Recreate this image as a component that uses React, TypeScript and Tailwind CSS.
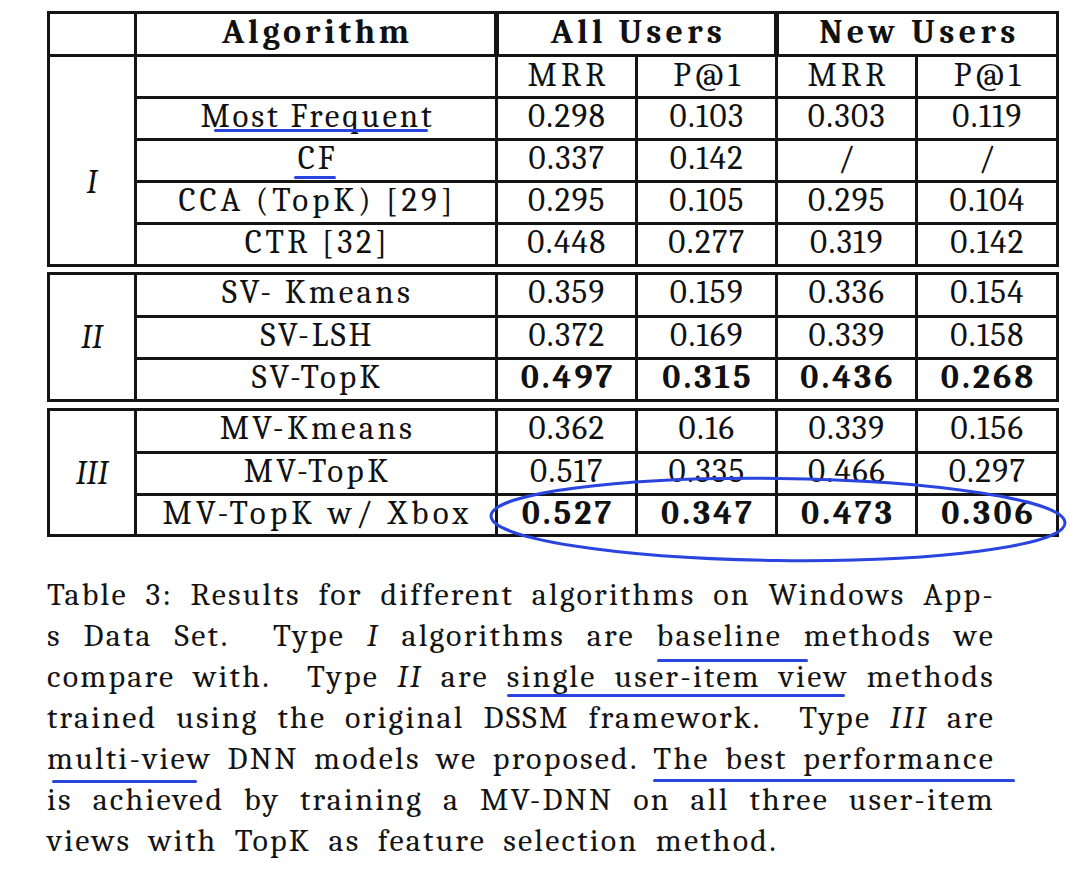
import React from "react";

const B = "border-[#141414]";

type RowData = {
  name: React.ReactNode;
  vals: string[];
  bold?: boolean;
  h: string;
  last?: boolean;
  track?: string;
};

function NumCell({ v, bold, idx }: { v: string; bold?: boolean; idx: number }) {
  return (
    <div
      className={`flex justify-center ${idx < 3 ? `border-r-[3px] ${B}` : ""} ${
        bold ? "text-[34px] font-bold tracking-[3px] pl-[3px]" : "text-[33px] tracking-[1.4px] pl-[1px]"
      }`}
    >
      {v}
    </div>
  );
}

function DataRow({ name, vals, bold, h, last, track }: RowData) {
  return (
    <div
      className={`grid grid-cols-[361px_140px_140px_140px_138px] ${h} ${last ? "" : `border-b-[3px] ${B}`}`}
    >
      <div className={`flex justify-center border-r-[3px] ${B} ${track ?? "tracking-[2.8px]"} pl-[3px]`}>{name}</div>
      {vals.map((v, i) => (
        <NumCell key={i} v={v} bold={bold} idx={i} />
      ))}
    </div>
  );
}

function TypeCell({ label, extra }: { label: string; extra?: string }) {
  return (
    <div
      className={`w-[87px] shrink-0 flex items-center justify-center border-r-[3px] ${B} italic ${extra ?? ""}`}
    >
      {label}
    </div>
  );
}

function Blue({ className }: { className: string }) {
  return <span className={`absolute h-[3px] bg-[#2a44df] rounded-full ${className}`} />;
}

export default function App() {
  const sectionI: RowData[] = [
    {
      name: (
        <span className="relative">
          Most Frequent
          <Blue className="left-[13px] right-[6px] top-[30px]" />
        </span>
      ),
      vals: ["0.298", "0.103", "0.303", "0.119"],
      h: "h-[42px]",
    },
    {
      name: (
        <span className="relative">
          CF
          <Blue className="left-[-4px] right-[1px] top-[35px]" />
        </span>
      ),
      vals: ["0.337", "0.142", "/", "/"],
      h: "h-[42px]",
    },
    { name: "CCA (TopK) [29]", vals: ["0.295", "0.105", "0.295", "0.104"], h: "h-[42px]", track: "tracking-[4px]" },
    { name: "CTR [32]", vals: ["0.448", "0.277", "0.319", "0.142"], h: "h-[39px]", last: true, track: "tracking-[3.6px]" },
  ];
  const sectionII: RowData[] = [
    { name: "SV- Kmeans", vals: ["0.359", "0.159", "0.336", "0.154"], h: "h-[43px]", track: "tracking-[3.2px]" },
    { name: "SV-LSH", vals: ["0.372", "0.169", "0.339", "0.158"], h: "h-[42px]" },
    { name: "SV-TopK", vals: ["0.497", "0.315", "0.436", "0.268"], bold: true, h: "h-[39px]", last: true, track: "tracking-[3.2px]" },
  ];
  const sectionIII: RowData[] = [
    { name: "MV-Kmeans", vals: ["0.362", "0.16", "0.339", "0.156"], h: "h-[43px]", track: "tracking-[3.2px]" },
    { name: "MV-TopK", vals: ["0.517", "0.335", "0.466", "0.297"], h: "h-[42px]", track: "tracking-[3.4px]" },
    { name: "MV-TopK w/ Xbox", vals: ["0.527", "0.347", "0.473", "0.306"], bold: true, h: "h-[38px]", last: true, track: "tracking-[4.3px]" },
  ];

  const justified = "whitespace-nowrap text-justify [text-align-last:justify]";

  return (
    <div className="relative w-[1080px] h-[874px] bg-white text-[#111] overflow-hidden font-serif">
      <div className="pl-[47px] pt-[11px]">
        <div className="flex flex-col text-[33px] leading-[34px]">
          {/* Section I */}
          <div className={`w-[1012px] border-[3px] ${B}`}>
            <div className={`grid grid-cols-[87px_362px_280px_277px] h-[43px] border-b-[3px] ${B} text-[34px] font-bold`}>
              <div className={`border-r-[3px] ${B}`} />
              <div className={`flex justify-center border-r-[5px] ${B} pt-[1px] pl-[4px] tracking-[3.8px]`}>Algorithm</div>
              <div className={`flex justify-center border-r-[5px] ${B} pt-[1px] pl-[4px] tracking-[4.2px]`}>All Users</div>
              <div className="flex justify-center pt-[1px] pl-[4px] tracking-[4.4px]">New Users</div>
            </div>
            <div className="flex">
              <TypeCell label="I" extra="pt-[42px]" />
              <div className="flex flex-col">
                <div className={`grid grid-cols-[361px_140px_140px_140px_138px] h-[42px] border-b-[3px] ${B} tracking-[4px]`}>
                  <div className={`border-r-[3px] ${B}`} />
                  <div className={`flex justify-center border-r-[3px] ${B} pt-[1px] pl-[4px]`}>MRR</div>
                  <div className={`flex justify-center border-r-[3px] ${B} pt-[1px] pl-[4px]`}>P@1</div>
                  <div className={`flex justify-center border-r-[3px] ${B} pt-[1px] pl-[4px]`}>MRR</div>
                  <div className="flex justify-center pt-[1px] pl-[4px]">P@1</div>
                </div>
                {sectionI.map((r, i) => (
                  <DataRow key={i} {...r} />
                ))}
              </div>
            </div>
          </div>

          {/* Section II */}
          <div className={`mt-[5px] w-[1012px] border-[3px] ${B} flex`}>
            <TypeCell label="II" />
            <div className="flex flex-col">
              {sectionII.map((r, i) => (
                <DataRow key={i} {...r} />
              ))}
            </div>
          </div>

          {/* Section III */}
          <div className={`mt-[6px] w-[1012px] border-[3px] ${B} flex`}>
            <TypeCell label="III" />
            <div className="flex flex-col">
              {sectionIII.map((r, i) => (
                <DataRow key={i} {...r} />
              ))}
            </div>
          </div>
        </div>

        {/* Caption */}
        <div className="mt-[37px] w-[948px] text-[32px] leading-[41px] tracking-[2.2px] [word-spacing:8px] text-[#141414]">
          <div className={justified}>Table 3: Results for different algorithms on Windows App-</div>
          <div className={justified}>
            s Data Set.{"\u00a0"} Type <i>I</i> algorithms are{" "}
            <span className="relative">
              baseline
              <Blue className="left-0 right-[-26px] top-[42px]" />
            </span>{" "}
            methods we
          </div>
          <div className={justified}>
            compare with.{"\u00a0"} Type <i>II</i> are{" "}
            <span className="relative">
              single user-item view
              <Blue className="left-0 right-[4px] top-[36px]" />
            </span>{" "}
            methods
          </div>
          <div className={justified}>
            trained using the original DSSM framework.{"\u00a0"} Type <i>III</i> are
          </div>
          <div className={`${justified} [word-spacing:3px]`}>
            <span className="relative">
              multi-view
              <Blue className="left-[5px] right-[15px] top-[40px]" />
            </span>{" "}
            DNN models we proposed.{" "}
            <span className="relative">
              The best performance
              <Blue className="left-0 right-[-20px] top-[39px]" />
            </span>
          </div>
          <div className={justified}>is achieved by training a MV-DNN on all three user-item</div>
          <div className="whitespace-nowrap">views with TopK as feature selection method.</div>
        </div>
      </div>

      {/* Hand-drawn ellipse annotation */}
      <svg
        className="absolute left-[486px] top-[474px] overflow-visible"
        width="586"
        height="92"
        viewBox="0 0 586 92"
        fill="none"
      >
        <ellipse
          cx="292"
          cy="45.5"
          rx="287"
          ry="41"
          stroke="#2a44df"
          strokeWidth="3"
          transform="rotate(0.7 292 45.5)"
        />
      </svg>
    </div>
  );
}
